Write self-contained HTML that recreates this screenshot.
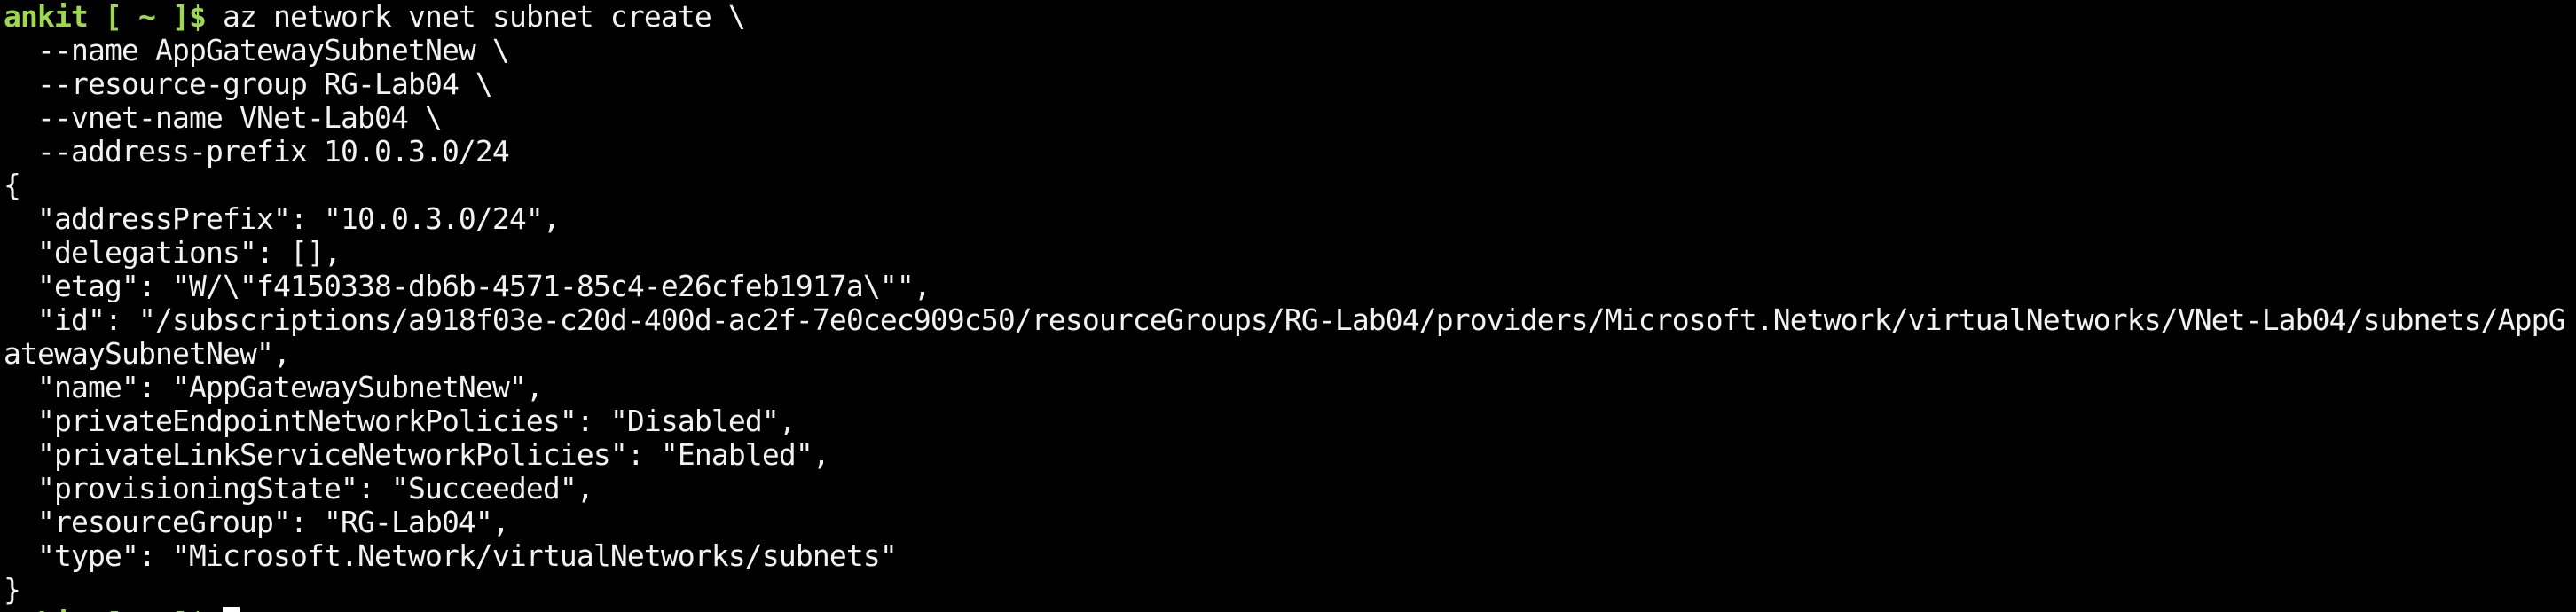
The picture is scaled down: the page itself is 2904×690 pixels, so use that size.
<!DOCTYPE html>
<html><head><meta charset="utf-8"><style>
html,body{margin:0;padding:0;background:#000;width:2904px;height:690px;overflow:hidden}
pre{margin:0;padding:0 0 0 4px;font-family:"DejaVu Sans Mono","Liberation Mono",monospace;font-size:33px;letter-spacing:-0.87px;line-height:38px;color:#f2f2f2;white-space:pre}
.g{color:#9ed84f;font-weight:bold}
.c{display:inline-block;width:19px;height:34px;background:#fff;vertical-align:top}
</style></head><body><pre><span class="g">ankit [ ~ ]$</span> az network vnet subnet create \
  --name AppGatewaySubnetNew \
  --resource-group RG-Lab04 \
  --vnet-name VNet-Lab04 \
  --address-prefix 10.0.3.0/24
{
  "addressPrefix": "10.0.3.0/24",
  "delegations": [],
  "etag": "W/\"f4150338-db6b-4571-85c4-e26cfeb1917a\"",
  "id": "/subscriptions/a918f03e-c20d-400d-ac2f-7e0cec909c50/resourceGroups/RG-Lab04/providers/Microsoft.Network/virtualNetworks/VNet-Lab04/subnets/AppG
atewaySubnetNew",
  "name": "AppGatewaySubnetNew",
  "privateEndpointNetworkPolicies": "Disabled",
  "privateLinkServiceNetworkPolicies": "Enabled",
  "provisioningState": "Succeeded",
  "resourceGroup": "RG-Lab04",
  "type": "Microsoft.Network/virtualNetworks/subnets"
}
<span class="g">ankit [ ~ ]$</span> <span class="c"></span></pre></body></html>
